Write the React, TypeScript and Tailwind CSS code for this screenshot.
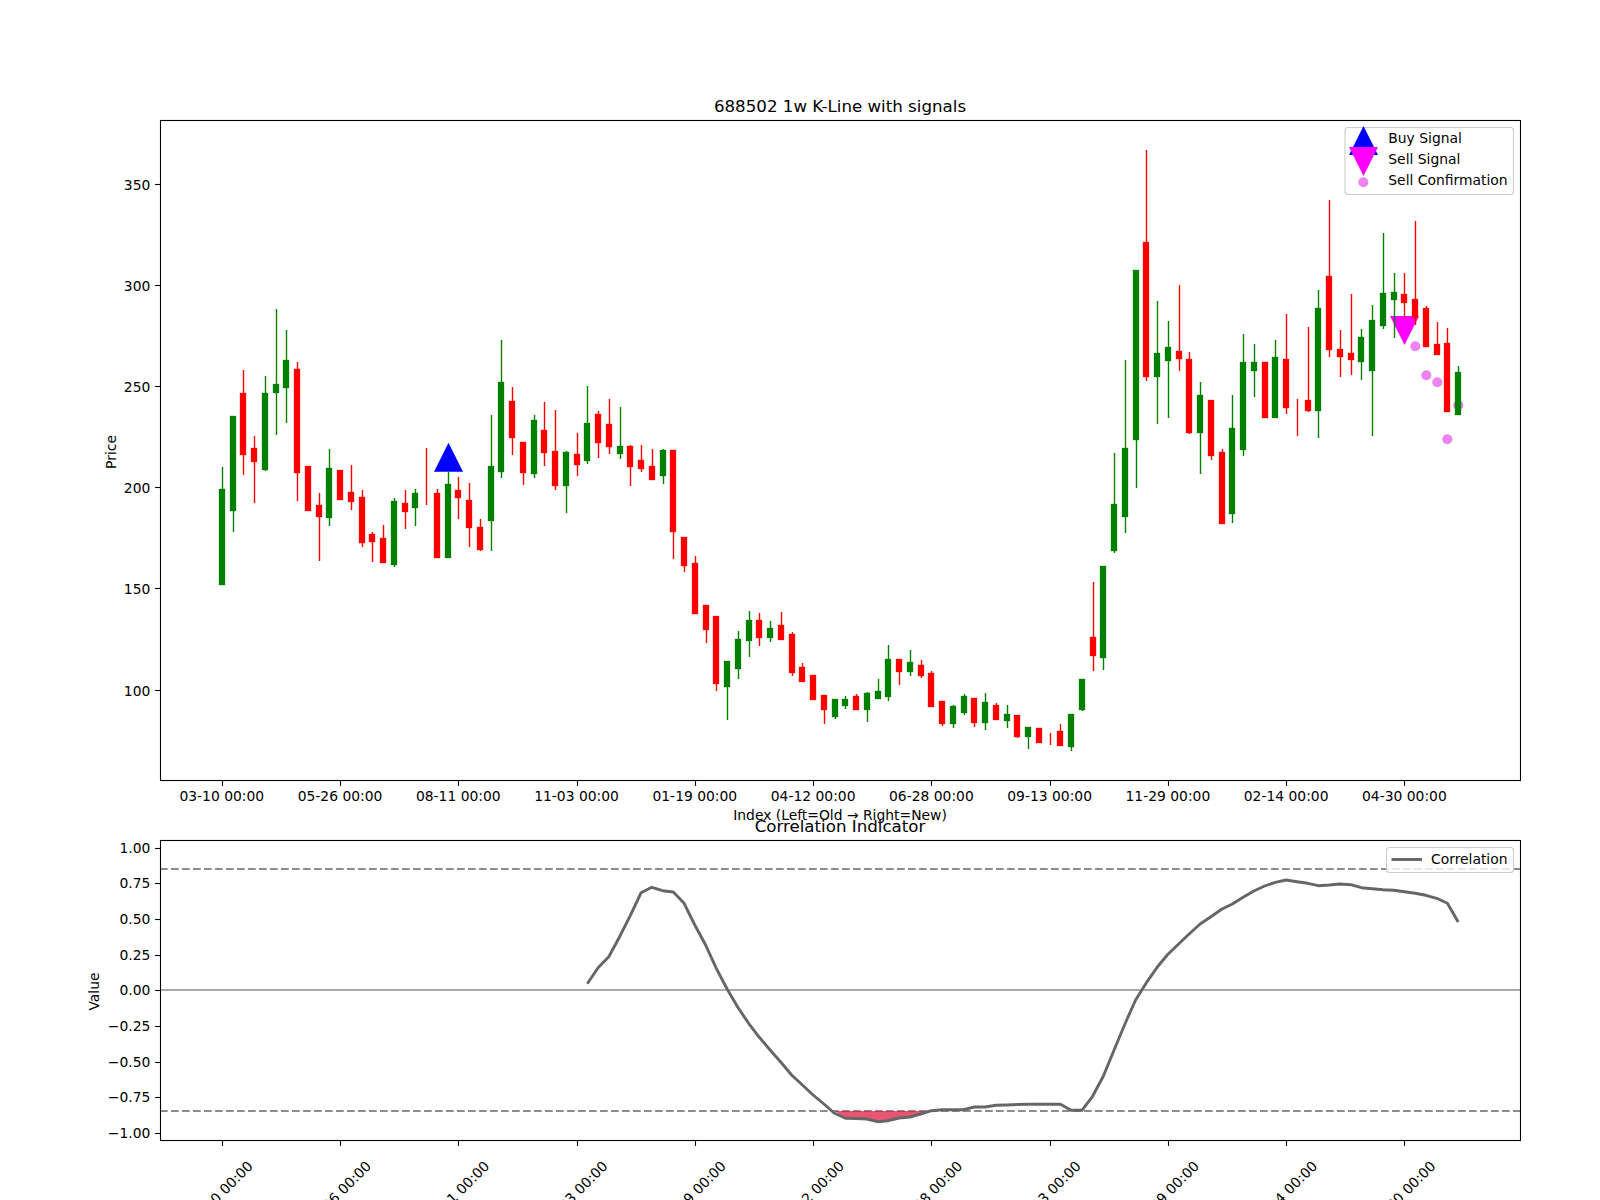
// Candle values are y positions in the price panel: [colour, high, bodyTop, bodyBottom, low]
type Candle = ['g' | 'r', number, number, number, number];

const candles: Candle[] = [
  ['g', 467, 489, 585, 585], ['g', 416, 416, 511, 532], ['r', 370, 393, 455, 475], ['r', 436, 448, 462, 503],
  ['g', 376, 393, 470, 471], ['g', 309, 384, 393, 435], ['g', 330, 360, 388, 423], ['r', 362, 369, 473, 501],
  ['r', 466, 466, 511, 511], ['r', 493, 505, 517, 561], ['g', 449, 468, 518, 526], ['r', 470, 470, 500, 500],
  ['r', 465, 492, 502, 510], ['r', 490, 497, 543, 547], ['r', 532, 534, 542, 562], ['r', 525, 538, 563, 563],
  ['g', 498, 501, 565, 567], ['r', 490, 503, 512, 529], ['g', 489, 493, 508, 526], ['r', 448, 476, 476, 505],
  ['r', 489, 493, 558, 558], ['g', 472, 484, 558, 558], ['r', 477, 490, 498, 519], ['r', 483, 500, 528, 547],
  ['r', 519, 527, 550, 551], ['g', 415, 466, 521, 551], ['g', 340, 382, 472, 478], ['r', 387, 401, 438, 455],
  ['r', 442, 442, 473, 485], ['g', 415, 420, 474, 478], ['r', 402, 430, 453, 466], ['r', 410, 451, 486, 490],
  ['g', 451, 452, 486, 513], ['r', 433, 454, 465, 476], ['g', 386, 423, 461, 464], ['r', 411, 414, 443, 458],
  ['r', 399, 424, 447, 454], ['g', 407, 446, 454, 459], ['r', 445, 446, 467, 486], ['r', 445, 460, 469, 472],
  ['r', 449, 466, 480, 480], ['g', 449, 450, 476, 484], ['r', 450, 450, 532, 559], ['r', 537, 537, 566, 572],
  ['r', 556, 563, 614, 614], ['r', 605, 605, 630, 643], ['r', 616, 616, 684, 691], ['g', 661, 661, 687, 720],
  ['g', 631, 639, 669, 679], ['g', 611, 620, 641, 657], ['r', 613, 620, 638, 646], ['g', 621, 628, 638, 642],
  ['r', 612, 625, 640, 640], ['r', 632, 634, 673, 676], ['r', 663, 667, 682, 682], ['r', 675, 675, 700, 700],
  ['r', 695, 695, 710, 724], ['g', 699, 699, 717, 719], ['g', 696, 699, 706, 709], ['r', 694, 696, 710, 710],
  ['g', 692, 693, 710, 722], ['g', 679, 691, 699, 699], ['g', 645, 659, 697, 701], ['r', 659, 659, 672, 685],
  ['g', 650, 662, 672, 676], ['r', 660, 665, 676, 678], ['r', 671, 673, 707, 707], ['r', 701, 701, 724, 726],
  ['g', 705, 706, 724, 728], ['g', 694, 696, 713, 715], ['r', 698, 698, 723, 727], ['g', 693, 702, 723, 730],
  ['r', 703, 705, 720, 720], ['g', 705, 714, 721, 728], ['r', 715, 715, 737, 738], ['g', 727, 727, 737, 749],
  ['r', 728, 728, 743, 743], ['r', 733, 740, 740, 745], ['r', 724, 731, 746, 746], ['g', 714, 714, 747, 751],
  ['g', 679, 679, 710, 711], ['r', 582, 637, 656, 671], ['g', 566, 566, 658, 670], ['g', 453, 504, 551, 553],
  ['g', 360, 448, 517, 533], ['g', 270, 270, 440, 488], ['r', 150, 242, 377, 381], ['g', 301, 353, 377, 424],
  ['g', 321, 347, 361, 418], ['r', 285, 351, 359, 371], ['r', 352, 359, 433, 434], ['g', 382, 395, 433, 474],
  ['r', 400, 400, 456, 460], ['r', 449, 452, 524, 524], ['g', 395, 428, 514, 523], ['g', 334, 362, 450, 456],
  ['g', 344, 362, 371, 397], ['r', 362, 362, 418, 418], ['g', 340, 357, 418, 418], ['r', 314, 359, 408, 414],
  ['r', 399, 410, 410, 436], ['r', 327, 400, 411, 412], ['g', 290, 308, 411, 438], ['r', 200, 276, 350, 357],
  ['r', 330, 349, 357, 377], ['r', 294, 353, 360, 375], ['g', 329, 337, 362, 380], ['g', 305, 320, 371, 436],
  ['g', 233, 293, 326, 329], ['g', 273, 292, 300, 338], ['r', 273, 294, 303, 318], ['r', 221, 299, 318, 325],
  ['r', 306, 308, 347, 347], ['r', 322, 344, 355, 355], ['r', 328, 343, 412, 412], ['g', 366, 372, 415, 415],
];

// correlation curve, y positions for candle index 34 to 115
const corr = [
  983.7, 967.7, 956.7, 936.7, 915.7, 892.7, 887.3, 890.7, 892, 903.3, 925, 945, 968.3, 989, 1007.3, 1023.3, 1037.3,
  1050, 1062.3, 1075, 1085, 1095, 1104, 1113.3, 1118.3, 1118.5, 1119, 1121.7, 1120.7, 1118, 1117, 1114, 1110.7,
  1109.7, 1109.7, 1109.7, 1107, 1107, 1105.3, 1105, 1104.5, 1104.3, 1104.3, 1104.3, 1104.3, 1110.3, 1110.3, 1096.3,
  1076, 1050, 1024, 1000, 982.7, 967.3, 954.3, 944, 933.7, 924, 916.7, 909.3, 904, 897.3, 891, 886, 882.3, 880,
  881.7, 883.3, 885.7, 885, 884, 884.7, 887.7, 888.7, 889.7, 890.3, 891.7, 893.3, 895.3, 898.3, 903.3, 922,
];

const dates = ['03-10', '05-26', '08-11', '11-03', '01-19', '04-12', '06-28', '09-13', '11-29', '02-14', '04-30'];
const barX = (i: number) => 221.8 + 10.751 * i;
const priceTicks: [string, number][] = [['350', 184.5], ['300', 285.5], ['250', 386.5], ['200', 487.5], ['150', 588.5], ['100', 690.5]];
const corrTicks: [string, number][] = [
  ['1.00', 848.5], ['0.75', 883.5], ['0.50', 919.5], ['0.25', 955.5], ['0.00', 990.5],
  ['\u22120.25', 1026.5], ['\u22120.50', 1062.5], ['\u22120.75', 1097.5], ['\u22121.00', 1133.5],
];
const confirmDots = [[1415.3, 346.3], [1426.3, 375.3], [1437.3, 382.3], [1458.3, 405.3], [1447.3, 439.3]];

function CandleBar({ c, i }: { c: Candle; i: number }) {
  const [dir, high, top, bottom, low] = c;
  const color = dir === 'g' ? '#008000' : '#ff0000';
  const x = barX(i);
  const wick = Math.round(x) + 0.5;
  return (
    <g>
      <line x1={wick} x2={wick} y1={high} y2={low} stroke={color} strokeWidth={1.4} />
      {bottom > top && <rect x={Math.round(x - 3)} y={top} width={6} height={bottom - top} fill={color} stroke={color} strokeWidth={0.3} />}
    </g>
  );
}

function XTicks({ top }: { top: number }) {
  return (
    <>
      {dates.map((_, k) => {
        const x = Math.round(barX(k * 11)) + 0.5;
        return <line key={k} x1={x} x2={x} y1={top} y2={top + 5.4} stroke="#000" strokeWidth={1.1} />;
      })}
    </>
  );
}

function YTicks({ ticks, shift }: { ticks: [string, number][]; shift: number }) {
  return (
    <>
      {ticks.map(([label, y]) => (
        <g key={label}>
          <line x1={155.1} x2={160.5} y1={y} y2={y} stroke="#000" strokeWidth={1.1} />
          <text x={150.3} y={y + shift} textAnchor="end">{label}</text>
        </g>
      ))}
    </>
  );
}

function PricePanel() {
  return (
    <svg width={1600} height={820} viewBox="0 0 1600 820" className="block overflow-visible text-[13.89px]">
      <text x={840} y={111.7} textAnchor="middle" className="text-[16.67px]">688502 1w K-Line with signals</text>
      <polygon points="448.5,442.7 434,471.7 463,471.7" fill="#0000ff" />
      <polygon points="1390,316 1419,316 1404.5,345" fill="#ff00ff" />
      {confirmDots.map(([cx, cy]) => <circle key={cx} cx={cx} cy={cy} r={5} fill="#ee82ee" />)}
      {candles.map((c, i) => <CandleBar key={i} c={c} i={i} />)}
      <rect x={160.5} y={120.5} width={1360} height={660} fill="none" stroke="#000" strokeWidth={1.1} />
      <XTicks top={780.5} />
      {dates.map((d, k) => (
        <text key={d} x={barX(k * 11)} y={800.7} textAnchor="middle">{d} 00:00</text>
      ))}
      <YTicks ticks={priceTicks} shift={5} />
      <text transform="translate(116 452) rotate(-90)" textAnchor="middle">Price</text>
      <text x={840} y={820} textAnchor="middle">Index (Left=Old → Right=New)</text>

      <rect x={1345} y={127.5} width={168.5} height={67} rx={3} fill="#fff" fillOpacity={0.8} stroke="#ccc" strokeWidth={1.1} />
      <polygon points="1363.5,126 1349,155 1378,155" fill="#0000ff" />
      <polygon points="1349,147 1378,147 1363.5,176" fill="#ff00ff" />
      <circle cx={1363.3} cy={182.3} r={5} fill="#ee82ee" />
      <text x={1388.3} y={143}>Buy Signal</text>
      <text x={1388.3} y={163.8}>Sell Signal</text>
      <text x={1388.3} y={185.3}>Sell Confirmation</text>
    </svg>
  );
}

function CorrelationPanel() {
  const curve = corr.map((y, k) => `${barX(k + 34).toFixed(1)},${y}`).join(' ');
  const shaded = corr.slice(24, 32).map((y, k) => `${barX(k + 58).toFixed(1)},${y}`).join(' ');
  return (
    <svg width={1600} height={380} viewBox="0 820 1600 380" className="block overflow-hidden text-[13.89px]">
      <text x={840} y={831.7} textAnchor="middle" className="text-[16.67px]">Correlation Indicator</text>
      <line x1={160} x2={1520} y1={990} y2={990} stroke="#aaa" strokeWidth={2} />
      <line x1={160} x2={1520} y1={869} y2={869} stroke="#8c8c8c" strokeWidth={2.1} strokeDasharray="7.7 3.3" />
      <line x1={160} x2={1520} y1={1111} y2={1111} stroke="#8c8c8c" strokeWidth={2.1} strokeDasharray="7.7 3.3" />
      <polygon points={`835,1111 ${shaded} 926,1111`} fill="#dc143c" fillOpacity={0.72} />
      <polyline points={curve} fill="none" stroke="#666" strokeWidth={2.9} strokeLinejoin="round" />
      <rect x={160.5} y={840.5} width={1360} height={300} fill="none" stroke="#000" strokeWidth={1.1} />
      <XTicks top={1140.5} />
      {dates.map((d, k) => {
        const x = barX(k * 11) + 32;
        return <text key={d} transform={`translate(${x} 1167) rotate(-45)`} textAnchor="end">{d} 00:00</text>;
      })}
      <YTicks ticks={corrTicks} shift={4.2} />
      <text transform="translate(98.5 991.5) rotate(-90)" textAnchor="middle">Value</text>

      <rect x={1386.5} y={847.5} width={127} height={25} rx={3} fill="#fff" fillOpacity={0.8} stroke="#ccc" strokeWidth={1.1} />
      <line x1={1391.5} x2={1422} y1={859.5} y2={859.5} stroke="#666" strokeWidth={2.9} />
      <text x={1431} y={863.8}>Correlation</text>
    </svg>
  );
}

export default function App() {
  return (
    <div className="flex flex-col w-[1600px] h-[1200px] overflow-hidden bg-white text-black font-['DejaVu_Sans',sans-serif]">
      <PricePanel />
      <CorrelationPanel />
    </div>
  );
}
